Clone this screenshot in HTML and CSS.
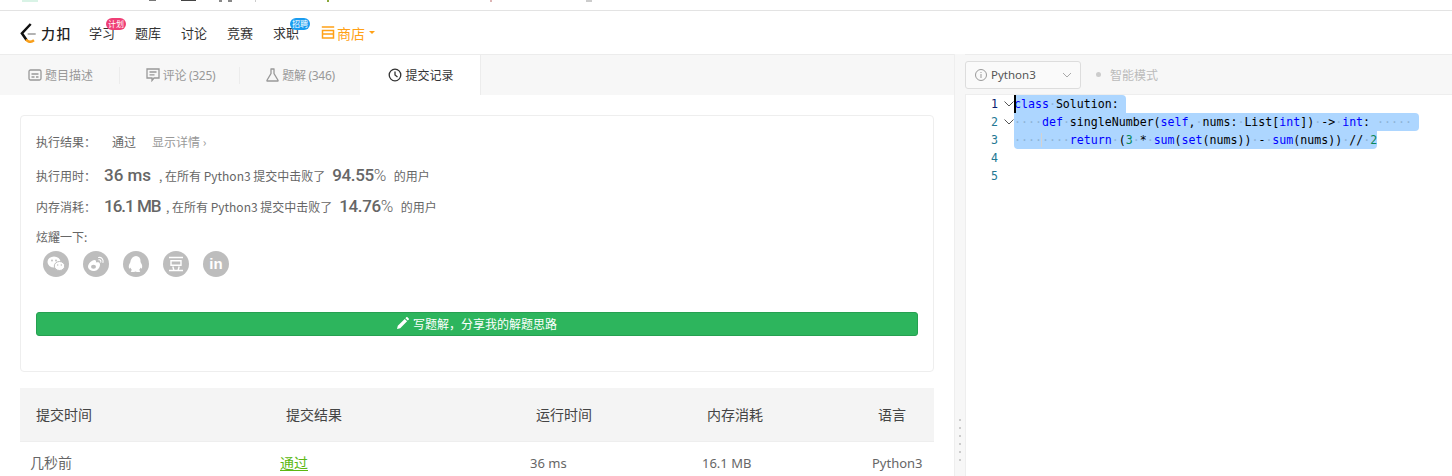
FILE: index.html
```html
<!DOCTYPE html>
<html lang="zh">
<head>
<meta charset="utf-8">
<title>力扣</title>
<link rel="stylesheet" href="styles.css">
</head>
<body>
<div class="strip">
  <i class="frag frag-green"></i><i class="frag frag-a"></i><i class="frag frag-b"></i><i class="frag frag-c"></i><i class="frag frag-c2"></i><i class="frag frag-line"></i><i class="frag frag-color"></i><i class="frag frag-pink"></i><i class="frag frag-gray"></i>
</div>
<header class="nav">
  <a class="logo">
    <svg width="18" height="21" viewBox="0 0 18 21" fill="none"><path d="M10.700 2 1.900 11.300 6.700 18.200" stroke="#111" stroke-width="2.500"/><path d="M6 17.500c2 2.700 5 2.800 8 .7" stroke="#f89f1b" stroke-width="2.500"/><path d="M7.700 12h8" stroke="#b3b3b3" stroke-width="2"/></svg>
    <span class="logo-text">力扣</span>
  </a>
  <a class="nav-item">学习<span class="badge badge-pink">计划</span></a>
  <a class="nav-item">题库</a>
  <a class="nav-item">讨论</a>
  <a class="nav-item">竞赛</a>
  <a class="nav-item nav-last">求职<span class="badge badge-blue">招聘</span></a>
  <a class="nav-item nav-store">
    <svg width="14" height="13" viewBox="0 0 14 13" fill="none" stroke="#ffa116" stroke-width="1.500"><path d="M.800 1h12.400M1.500 4.500h11V12h-11zM1.500 8h11"/></svg>商店<i class="caret"></i>
  </a>
</header>
<main class="work">
  <section class="left">
    <nav class="tabs">
      <a class="tab">
        <svg width="14" height="12" viewBox="0 0 14 12" fill="none" stroke="#999" stroke-width="1.300"><rect x="1" y="1" width="12" height="10" rx="1.500"/><path d="M3.500 5h7M3.500 8h3M8 8h2.500"/></svg>题目描述</a>
      <a class="tab tab-count">
        <svg width="14" height="14" viewBox="0 0 14 14" fill="none" stroke="#999" stroke-width="1.300"><path d="M1 1h12v9H8l-2 2.500V10H1zM3.500 4h7M3.500 6.800h5"/></svg>评论 (325)</a>
      <a class="tab tab-count">
        <svg width="13" height="14" viewBox="0 0 13 14" fill="none" stroke="#999" stroke-width="1.300"><path d="M4.500 1h4M5 1v4.500L1 12.200c-.2.500 0 .8.500.8h10c.5 0 .7-.3.500-.8L8 5.500V1"/></svg>题解 (346)</a>
      <a class="tab tab-active">
        <svg width="14" height="14" viewBox="0 0 14 14" fill="none" stroke="#333" stroke-width="1.300"><circle cx="7" cy="7" r="5.800"/><path d="M7 3.500V7l2.500 2"/></svg>提交记录</a>
    </nav>
    <div class="content">
      <div class="card">
        <div class="row row-result"><span class="label">执行结果：</span><a class="passed">通过</a><a class="detail">显示详情 ›</a></div>
        <div class="row row-stat"><span class="label">执行用时：</span><b class="num num-a">36 ms</b><span class="sub">, 在所有 Python3 提交中击败了</span><b class="pct">94.55<em>%</em></b><span class="sub users">的用户</span></div>
        <div class="row row-stat row-mem"><span class="label">内存消耗：</span><b class="num num-b">16.1 MB</b><span class="sub">, 在所有 Python3 提交中击败了</span><b class="pct">14.76<em>%</em></b><span class="sub users">的用户</span></div>
        <div class="row row-share"><span class="label">炫耀一下:</span></div>
        <div class="social">
          <a class="soc"><svg width="18" height="16" viewBox="0 0 18 16" fill="#fff"><ellipse cx="7" cy="6" rx="6.500" ry="5.500"/><ellipse cx="12.500" cy="10" rx="5.200" ry="4.500" stroke="#bdbdbd"/><circle cx="5" cy="4.500" r=".9" fill="#bdbdbd"/><circle cx="9" cy="4.500" r=".9" fill="#bdbdbd"/><circle cx="10.700" cy="9" r=".7" fill="#bdbdbd"/><circle cx="14.300" cy="9" r=".7" fill="#bdbdbd"/></svg></a>
          <a class="soc"><svg width="18" height="16" viewBox="0 0 18 16" fill="none"><path d="M7.500 15C3.500 15 1 13 1 10.500 1 8 4.500 4 7.500 4c1.500 0 1.800 1.300 1.400 2.500C11 6 13 6.200 13 8.500c0 3.500-3 6.500-5.500 6.500z" fill="#fff"/><ellipse cx="6.500" cy="10.800" rx="2.500" ry="2" fill="#bdbdbd"/><path d="M11.500 1.500c3-.6 5.200 2 4.500 5M11.800 3.800c1.500-.3 2.400 1 2 2.400" stroke="#fff" stroke-width="1.100" stroke-linecap="round"/></svg></a>
          <a class="soc"><svg width="16" height="17" viewBox="0 0 16 17" fill="#fff"><path d="M8 0c3 0 4.500 2.200 4.500 5 0 1 .2 1.500.8 2.500.8 1.300 1.200 3 .7 4.500-.5 1-1 .5-1.500-.5-.2 1.200-.8 2-1.500 2.500 1 .5 1.500 1 1 1.700-.5.500-3 .5-4.500-.2-1.500.7-4 .7-4.500.2-.5-.7 0-1.200 1-1.700-.7-.5-1.300-1.300-1.500-2.500-.5 1-1 1.500-1.500.5-.5-1.500-.1-3.200.7-4.500.6-1 .8-1.500.8-2.500C3.500 2.200 5 0 8 0z"/></svg></a>
          <a class="soc"><svg width="16" height="16" viewBox="0 0 16 16" fill="none" stroke="#fff" stroke-width="1.400"><path d="M1 1.500h14M3 4.700h10v4.600H3zM1 14.500h14M4.800 10.500l1 3.500M11.200 10.500l-1 3.500"/></svg></a>
          <a class="soc soc-in">in</a>
        </div>
        <a class="write">
          <svg width="12" height="12" viewBox="0 0 12 12" fill="#fff"><path d="M0 12l.8-3.200L7.700 1.900l2.400 2.400L3.200 11.200zM8.400 1.200 9.500.1c.2-.2.500-.2.700 0l1.700 1.700c.2.200.2.500 0 .7l-1.100 1.100z"/></svg>写题解，分享我的解题思路</a>
      </div>
      <table class="table">
        <thead><tr><th class="h1">提交时间</th><th class="h2">提交结果</th><th class="h3">运行时间</th><th class="h4">内存消耗</th><th class="h5">语言</th></tr></thead>
        <tbody><tr><td class="d1">几秒前</td><td class="d2"><a class="ok">通过</a></td><td class="d3">36 ms</td><td class="d4">16.1 MB</td><td class="d5">Python3</td></tr></tbody>
      </table>
    </div>
  </section>
  <div class="split"><div class="grip"><i></i><i></i><i></i><i></i><i></i><i></i></div></div>
  <section class="right">
    <div class="toolbar">
      <div class="select">
        <svg width="12" height="12" viewBox="0 0 12 12" fill="none" stroke="#999"><circle cx="6" cy="6" r="5.500"/><path d="M6 5v4M6 3v1"/></svg>
        <span class="select-text">Python3</span>
        <svg class="chev" width="10" height="6" viewBox="0 0 10 6" fill="none" stroke="#aaa"><path d="M1 1l4 4 4-4"/></svg>
      </div>
      <span class="mode"><i class="dot"></i>智能模式</span>
    </div>
    <div class="editor">
      <div class="gutter">
        <div class="ln ln-active">1<svg class="fold" width="10" height="6" viewBox="0 0 10 6" fill="none" stroke="#555"><path d="M.5.500 5 5 9.500.500"/></svg></div>
        <div class="ln">2<svg class="fold" width="10" height="6" viewBox="0 0 10 6" fill="none" stroke="#555"><path d="M.5.500 5 5 9.500.500"/></svg></div>
        <div class="ln">3</div>
        <div class="ln">4</div>
        <div class="ln">5</div>
      </div>
      <div class="code">
        <div class="line"><span class="sel sel-1"><span class="cursor"></span><span class="kw">class</span><span class="ws">·</span>Solution:<span class="ws"> </span></span></div>
        <div class="line"><span class="sel sel-2"><span class="ws">····</span><span class="kw">def</span><span class="ws">·</span>singleNumber(<span class="kw">self</span>,<span class="ws">·</span>nums:<span class="ws">·</span>List[<span class="kw">int</span>])<span class="ws">·</span>-&gt;<span class="ws">·</span><span class="kw">int</span>:<span class="ws"> ····· </span></span></div>
        <div class="line"><span class="sel sel-3"><span class="ws guide">····</span><span class="ws">····</span><span class="kw">return</span><span class="ws">·</span>(<span class="nm">3</span><span class="ws">·</span>*<span class="ws">·</span><span class="kw">sum</span>(<span class="kw">set</span>(nums))<span class="ws">·</span>-<span class="ws">·</span><span class="kw">sum</span>(nums))<span class="ws">·</span>//<span class="ws">·</span><span class="nm">2</span></span></div>
        <div class="line"></div>
        <div class="line"></div>
      </div>
    </div>
  </section>
</main>
</body>
</html>
```
FILE: styles.css
```css
* { box-sizing: border-box; }
html, body { margin: 0; height: 476px; overflow: hidden; background: #fff; }
body { font-family: "Liberation Sans", "Noto Sans CJK SC", sans-serif; font-size: 12px; color: #666; }
a { display: inline-block; }

.strip { height: 11px; border-bottom: 1px solid #e3e3e3; position: relative; overflow: hidden; }
.frag { position: absolute; top: 0; display: block; }
.frag-green { left: 22px; width: 16px; height: 2px; background: #d9f3e6; }
.frag-a { left: 149px; width: 7px; height: 1px; background: #777; }
.frag-b { left: 181px; width: 15px; height: 1px; background: #444; }
.frag-c { left: 219px; width: 3px; height: 2px; background: #888; }
.frag-c2 { left: 228px; width: 4px; height: 2px; background: #888; }
.frag-line { left: 255px; width: 1px; height: 2px; background: #ccc; }
.frag-color { left: 327px; width: 2px; height: 2px; background: #8aa83a; }
.frag-pink { left: 490px; width: 2px; height: 2px; background: #ddb5b5; }
.frag-gray { left: 586px; width: 6px; height: 2px; background: #ccc; }

.nav { height: 43px; display: flex; align-items: center; padding-left: 20px; color: #333; }
.logo { display: flex; align-items: center; width: 69px; }
.logo svg { margin-right: 3px; }
.logo-text { font-size: 14px; font-weight: 500; letter-spacing: 1.500px; color: #222; font-family: "Noto Sans CJK SC", sans-serif; line-height: 20px; }
.nav-item { position: relative; font-size: 13px; line-height: 20px; font-family: "Noto Sans CJK SC", sans-serif; margin-right: 20px; width: 26px; }
.nav-last { margin-right: 22px; }
.nav-store { display: flex; align-items: center; color: #ffa116; width: auto; margin: 0; font-size: 14px; }
.nav-store svg { margin-right: 2px; }
.badge { position: absolute; top: -5px; left: 17px; width: 20px; height: 12px; border-radius: 6px; font-size: 8px; line-height: 12px; text-align: center; color: #fff; }
.badge-pink { background: #ef3f76; }
.badge-blue { background: #1a9cf0; }
.caret { margin-left: 4px; width: 0; height: 0; border: 3px solid transparent; border-top-color: #ffa116; border-bottom: 0; }

.work { display: grid; grid-template-columns: 954px 11px 487px; grid-template-rows: 422px; height: 422px; }
.left { min-width: 0; overflow: hidden; }
.tabs { height: 41px; display: flex; background: #f7f7f7; border-top: 1px solid #ececec; }
.tab { width: 120px; display: flex; align-items: center; justify-content: center; gap: 3px; padding-left: 1px; color: #999; font-size: 12px; position: relative; font-family: "Noto Sans", "Noto Sans CJK SC", sans-serif; }
.tab-count { letter-spacing: -.3px; }
.tab:not(.tab-active):not(:nth-child(3))::after { content: ""; position: absolute; right: 0; top: 12px; height: 17px; width: 1px; background: #ececec; }
.tab-active { background: #fff; color: #333; box-shadow: 1px 0 0 #ececec; padding-left: 2px; }

.content { padding: 20px 20px 0; }
.card { height: 257px; border: 1px solid #eee; border-radius: 4px; padding: 14px 15px 0; }
.row { display: flex; align-items: center; color: #666; font-family: "Noto Sans CJK SC", sans-serif; font-size: 12px; white-space: nowrap; }
.row-result { height: 22px; }
.row-result .label { width: 76px; }
.passed { color: #666; width: 40px; }
.detail { color: #999; }
.row-stat { height: 32px; margin-top: 7px; }
.row-mem { margin-top: -1px; }
.row-stat .label { width: 68px; flex: none; }
.num { font: 500 17px "Roboto", sans-serif; color: #666; width: 55px; }
.num-b { width: 62px; letter-spacing: -1px; }
.sub { font-size: 12px; }
.pct { font: 500 17px "Roboto", sans-serif; color: #666; margin-left: 7px; letter-spacing: -.4px; }
.pct em { font-style: normal; font-weight: 300; }
.users { margin-left: 8px; }
.row-share { height: 20px; margin-top: 4px; }
.social { display: flex; gap: 14px; padding: 5px 0 0 7px; }
.soc { width: 26px; height: 26px; border-radius: 50%; background: #bdbdbd; display: flex; align-items: center; justify-content: center; color: #fff; }
.soc-in { font: 700 15px "Liberation Sans", sans-serif; padding-bottom: 1px; }
.write { margin-top: 35px; height: 24px; padding-bottom: 2px; display: flex; align-items: center; justify-content: center; gap: 4px; background: #2db55d; border: 1px solid #26a051; border-radius: 3px; color: #fff; font-size: 12px; font-family: "Noto Sans CJK SC", sans-serif; }

.table { width: 914px; margin-top: 16px; border-collapse: collapse; table-layout: fixed; }
.table th { height: 53px; padding-bottom: 2px; background: #f4f4f4; font-weight: 400; font-size: 14px; color: #444; border-bottom: 1px solid #eee; text-align: left; font-family: "Noto Sans CJK SC", sans-serif; }
.table td { height: 44px; font-size: 13px; color: #666; vertical-align: top; padding-top: 12px; text-align: left; font-family: "Noto Sans", "Noto Sans CJK SC", sans-serif; }
.h1, .d1 { width: 200px; }
.h2, .d2 { width: 237px; }
.h3, .d3 { width: 177px; }
.h4, .d4 { width: 167px; }
.table .h1 { padding-left: 16px; }
.table .h2 { padding-left: 66px; }
.table .h3 { padding-left: 79px; }
.table .h4 { padding-left: 73px; }
.table .h5 { padding-left: 77px; }
.table .d1 { padding-left: 10px; padding-top: 10px; font-size: 14px; }
.table .d2 { padding-left: 60px; padding-top: 10px; }
.table .d3 { padding-left: 73px; }
.table .d4 { padding-left: 68px; }
.table .d5 { padding-left: 71px; }
.ok { color: #5cb811; font-size: 14px; text-decoration: underline; text-underline-offset: 2px; font-family: "Noto Sans CJK SC", sans-serif; }

.split { background: #f7f7f7; border-left: 1px solid #eee; display: flex; justify-content: center; align-items: flex-end; padding-bottom: 15px; }
.grip { display: flex; flex-direction: column; gap: 6px; }
.grip i { display: block; width: 2px; height: 2px; background: #ccc; }

.toolbar { height: 41px; background: #f7f7f7; border-top: 1px solid #ececec; border-bottom: 1px solid #eee; display: flex; align-items: center; }
.select { width: 116px; height: 28px; border: 1px solid #ddd; border-radius: 3px; background: #fafafa; display: flex; align-items: center; padding: 0 8px 0 9px; color: #555; font-family: "Noto Sans", sans-serif; font-size: 11.5px; }
.select-text { margin-left: 4px; flex: 1; }
.mode { display: flex; align-items: center; margin-left: 15px; color: #bbb; font-size: 12px; font-family: "Noto Sans CJK SC", sans-serif; }
.dot { width: 5px; height: 5px; border-radius: 50%; background: #ccc; margin-right: 9px; }

.editor { display: flex; border-left: 1px solid #eee; height: 381px; font: 11.6px/18px "DejaVu Sans Mono", monospace; }
.gutter { width: 48px; flex: none; text-align: right; }
.ln { position: relative; height: 18px; color: #237893; padding-right: 16px; }
.ln-active { color: #0b216f; }
.fold { position: absolute; left: 38px; top: 6px; }
.code { flex: 1; color: #000; }
.line { height: 18px; white-space: pre; }
.sel { display: inline-block; height: 18px; background: #add6ff; position: relative; vertical-align: top; }
.sel-1 { border-radius: 0 4px 0 0; }
.sel-2 { border-radius: 0 4px 4px 0; }
.sel-3 { border-radius: 0 0 4px 4px; }
.cursor { position: absolute; left: 0; top: 0; width: 2px; height: 18px; background: #000; }
.kw { color: #00f; }
.nm { color: #098658; }
.ws { color: #8fb4d8; }
.guide { box-shadow: inset -1px 0 0 #d3d3d3; }
```
